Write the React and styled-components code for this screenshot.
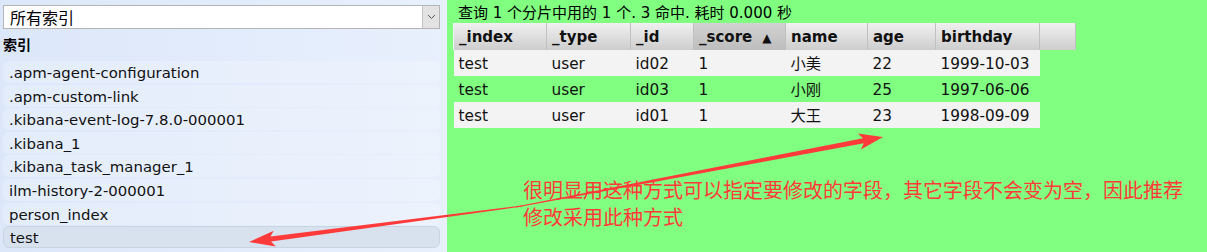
import React from "react"
import styled, { createGlobalStyle } from "styled-components"

const GlobalStyle = createGlobalStyle`
  body {
    margin: 0;
    font-family: "DejaVu Sans", Verdana, "Noto Sans CJK SC", sans-serif;
    color: #111;
  }
`

const indices = [
  ".apm-agent-configuration",
  ".apm-custom-link",
  ".kibana-event-log-7.8.0-000001",
  ".kibana_1",
  ".kibana_task_manager_1",
  "ilm-history-2-000001",
  "person_index",
  "test",
]

const columns = [
  { key: "_index", width: 93 },
  { key: "_type", width: 84 },
  { key: "_id", width: 63 },
  { key: "_score", width: 92, sorted: true },
  { key: "name", width: 82 },
  { key: "age", width: 68 },
  { key: "birthday", width: 104 },
]

const rows = [
  ["test", "user", "id02", "1", "小美", "22", "1999-10-03"],
  ["test", "user", "id03", "1", "小刚", "25", "1997-06-06"],
  ["test", "user", "id01", "1", "大王", "23", "1998-09-09"],
]

// tapered arrow: thin tail, thicker shaft near the head
const arrowPoints = (tail, tip, tailW, shaftW, headLen, headW) => {
  const dx = tip[0] - tail[0]
  const dy = tip[1] - tail[1]
  const len = Math.hypot(dx, dy)
  const ux = dx / len
  const uy = dy / len
  const nx = -uy
  const ny = ux
  const base = [tip[0] - ux * headLen, tip[1] - uy * headLen]
  const wing = [tip[0] - ux * (headLen + 4), tip[1] - uy * (headLen + 4)]
  const p = (pt, k) => `${(pt[0] + nx * k).toFixed(1)},${(pt[1] + ny * k).toFixed(1)}`
  return [
    p(tail, tailW / 2),
    p(base, shaftW / 2),
    p(wing, headW),
    `${tip[0]},${tip[1]}`,
    p(wing, -headW),
    p(base, -shaftW / 2),
    p(tail, -tailW / 2),
  ].join(" ")
}

const App = () => {
  return (
    <>
      <GlobalStyle />
      <Page>
        <Sidebar>
          <SelectBox>
            <SelectValue>所有索引</SelectValue>
            <SelectButton>
              <svg width="9" height="6" viewBox="0 0 9 6">
                <path d="M1 1 L4.5 4.5 L8 1" fill="none" stroke="#555" strokeWidth="1" />
              </svg>
            </SelectButton>
          </SelectBox>
          <SectionTitle>索引</SectionTitle>
          <IndexList>
            {indices.map((name) => (
              <IndexItem key={name} $selected={name === "test"}>
                {name}
              </IndexItem>
            ))}
          </IndexList>
        </Sidebar>
        <Main>
          <Status>查询 1 个分片中用的 1 个. 3 命中. 耗时 0.000 秒</Status>
          <Table>
            <thead>
              <tr>
                {columns.map((c) => (
                  <HeadCell key={c.key} $w={c.width} $sorted={c.sorted}>
                    {c.key}
                    {c.sorted && <SortMark>▲</SortMark>}
                  </HeadCell>
                ))}
                <HeadCell $w={36} />
              </tr>
            </thead>
            <tbody>
              {rows.map((r, i) => (
                <tr key={r[2]}>
                  {r.map((v, j) => (
                    <Cell key={j} $odd={i % 2 === 0}>
                      {v}
                    </Cell>
                  ))}
                </tr>
              ))}
            </tbody>
          </Table>
          <Note>
            很明显用这种方式可以指定要修改的字段，其它字段不会变为空，因此推荐
            <br />
            修改采用此种方式
          </Note>
        </Main>
        <Arrows width="1207" height="252" viewBox="0 0 1207 252">
          <polygon fill="#ff3a3a" points={arrowPoints([516, 207], [883, 137], 1, 5, 20, 8)} />
          <polygon fill="#ff3a3a" points={arrowPoints([522, 206], [249, 242], 1, 5, 22, 8)} />
        </Arrows>
      </Page>
    </>
  )
}

const Page = styled.div`
  position: relative;
  display: flex;
  width: 1207px;
  height: 252px;
  overflow: hidden;
`

const Sidebar = styled.div`
  width: 447px;
  flex-shrink: 0;
  box-sizing: border-box;
  padding: 5px 7px 0 3px;
  background: linear-gradient(to right, #dce7f9, #e8f0fd);
`

const SelectBox = styled.div`
  display: flex;
  height: 24px;
  box-sizing: border-box;
  border: 1px solid #b4b4b4;
  background: #fff;
`

const SelectValue = styled.div`
  flex: 1;
  padding-left: 6px;
  font-family: "Noto Sans CJK SC", sans-serif;
  font-size: 16px;
  line-height: 22px;
  color: #000;
`

const SelectButton = styled.div`
  width: 16px;
  display: flex;
  align-items: center;
  justify-content: center;
  background: #e3e3e3;
  border-left: 1px solid #c4c4c4;
`

const SectionTitle = styled.div`
  margin-top: 5px;
  height: 22px;
  font-family: "Noto Sans CJK SC", sans-serif;
  font-weight: bold;
  font-size: 14px;
  line-height: 21px;
  color: #000;
`

const IndexList = styled.div`
  display: flex;
  flex-direction: column;
  gap: 1.6px;
  margin-top: 5px;
`

const IndexItem = styled.div`
  height: 22px;
  box-sizing: border-box;
  padding-left: 6px;
  font-size: 14.9px;
  line-height: ${(p) => (p.$selected ? "22px" : "24px")};
  color: #111;
  border-radius: 6px;
  background: ${(p) => (p.$selected ? "#d8e2ee" : "rgba(255, 255, 255, 0.22)")};
  border: ${(p) => (p.$selected ? "1px solid #c9d4e2" : "none")};
`

const Main = styled.div`
  flex: 1;
  background: #80ff80;
  padding-left: 6px;
`

const Status = styled.div`
  height: 23px;
  box-sizing: border-box;
  padding: 3px 0 0 5px;
  font-size: 15px;
  line-height: 20px;
  color: #000;
`

const Table = styled.table`
  border-collapse: collapse;
  border-spacing: 0;
  table-layout: fixed;
`

const HeadCell = styled.th`
  width: ${(p) => p.$w}px;
  height: 27px;
  box-sizing: border-box;
  padding: 0 0 0 5px;
  text-align: left;
  font-size: 15px;
  font-weight: bold;
  color: #111;
  background: ${(p) =>
    p.$sorted
      ? "linear-gradient(#d2d2d2, #bdbdbd)"
      : "linear-gradient(#f0f0f0, #cdcdcd)"};
  border-left: 1px solid #f2f2f2;
  border-right: 1px solid #c0c0c0;
  white-space: nowrap;
`

const SortMark = styled.span`
  font-size: 12px;
  margin-left: 10px;
`

const Cell = styled.td`
  height: 26px;
  box-sizing: border-box;
  padding: 2px 0 0 5px;
  font-size: 15.3px;
  line-height: 24px;
  color: #111;
  white-space: nowrap;
  background: ${(p) => (p.$odd ? "#f3f3f3" : "transparent")};
`

const Note = styled.div`
  margin: 48px 0 0 70px;
  font-family: "Noto Sans CJK SC", sans-serif;
  font-size: 20px;
  line-height: 27px;
  color: #ff3a3a;
`

const Arrows = styled.svg`
  position: absolute;
  left: 0;
  top: 0;
  pointer-events: none;
`

export default App
